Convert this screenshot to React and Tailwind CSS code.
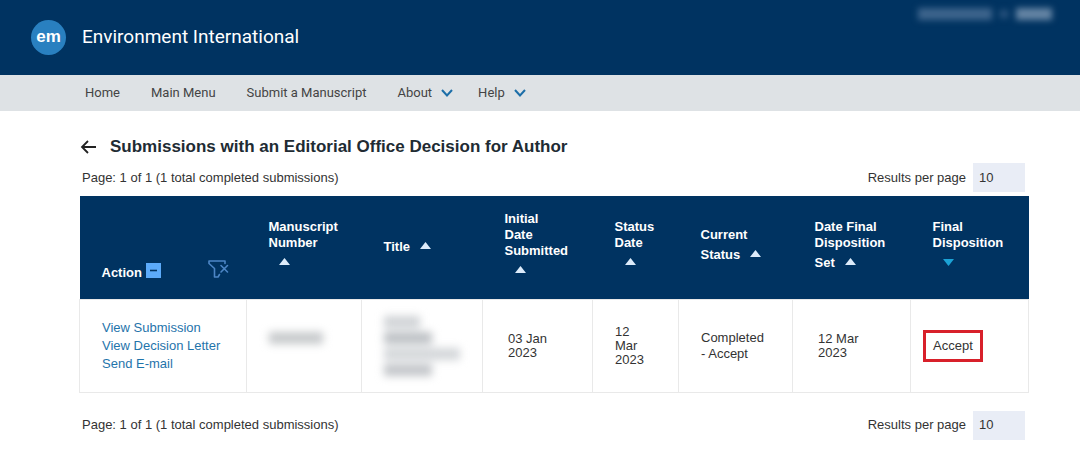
import { useState } from 'react';

const columns = [
  { lines: ['Manuscript', 'Number', ''], width: 'w-[115px]' },
  { lines: ['Title'], width: 'w-[121px]' },
  { lines: ['Initial', 'Date', 'Submitted', ''], width: 'w-[110px]' },
  { lines: ['Status', 'Date', ''], width: 'w-[86px]' },
  { lines: ['Current', 'Status'], width: 'w-[114px]' },
  { lines: ['Date Final', 'Disposition', 'Set'], width: 'w-[118px]' },
  { lines: ['Final', 'Disposition', ''], width: 'w-[118px]', sorted: true },
];

const SortArrow = ({ down }) => (
  <svg className={`h-6 w-[11px] ${down ? 'text-[#1ba3d6]' : 'text-[#dcebfa]'}`} viewBox="0 0 11 24" fill="currentColor">
    {down ? <path d="M0 8h11L5.5 15z" /> : <path d="M5.5 7L11 14H0z" />}
  </svg>
);

const Chevron = () => (
  <svg className="h-3 w-3 text-[#1c6ea8]" viewBox="0 0 12 12" fill="none" stroke="currentColor" strokeWidth="2">
    <path d="M1 3l5 5.5L11 3" />
  </svg>
);

const HeaderCell = ({ lines, sorted }) => {
  const first = lines.slice(0, -1);
  const last = lines[lines.length - 1];

  return (
    <th className="pl-[22px] pb-px text-left align-middle font-bold">
      <button type="button" aria-label={`Sort by ${lines.join(' ').trim()}`} className="block whitespace-nowrap text-left">
        {first.map((line) => (
          <span key={line} className="block">{line}</span>
        ))}
        <span className="flex h-6 items-center gap-[10px]">
          <span>{last}</span>
          <SortArrow down={sorted} />
        </span>
      </button>
    </th>
  );
};

const Pager = ({ id }) => {
  const [size, setSize] = useState('10');

  return (
    <div className="flex items-center justify-between px-[3px]">
      <p>Page: 1 of 1 (1 total completed submissions)</p>
      <div className="flex items-center gap-[7px]">
        <label htmlFor={id}>Results per page</label>
        <select
          id={id}
          value={size}
          onChange={(e) => setSize(e.target.value)}
          className="h-[29px] w-[52px] appearance-none bg-[#e9edf6] px-[6px]"
        >
          <option value="10">10</option>
          <option value="25">25</option>
          <option value="50">50</option>
        </select>
      </div>
    </div>
  );
};

const App = () => {
  return (
    <div className="min-h-screen bg-white font-['Liberation_Sans',Arial,sans-serif] text-[13px] text-[#333]">
      <header className="flex h-[75px] items-center justify-between bg-[#003361] pl-[31px] pr-7">
        <div className="flex items-center gap-4">
          <div className="flex h-[35px] w-[35px] items-center justify-center rounded-full bg-[#2980c0] pb-0.5 text-[17px] font-bold text-white">
            em
          </div>
          <h1 className="font-[Roboto,sans-serif] text-[19px] text-white">Environment International</h1>
        </div>
        <div className="flex items-center gap-2 self-start pt-2 blur-[3px]">
          <span className="h-3 w-[74px] bg-[#3c648c]" />
          <span className="h-2 w-2 bg-[#2c5680]" />
          <span className="h-3 w-9 bg-[#6484a4]" />
        </div>
      </header>

      <nav className="flex h-9 items-center gap-[31px] bg-[#dee2e5] pl-[85px] font-[Roboto,sans-serif] text-[13px] text-[#444]">
        <a href="#home">Home</a>
        <a href="#menu">Main Menu</a>
        <a href="#submit">Submit a Manuscript</a>
        <button type="button" className="flex items-center gap-[9px]">About <Chevron /></button>
        <button type="button" className="-ml-[6px] flex items-center gap-[9px]">Help <Chevron /></button>
      </nav>

      <main className="pl-[79px] pr-[52px] pt-6">
        <div className="flex items-center gap-[14px] pb-1">
          <a href="#back" aria-label="Back">
            <svg className="h-[14px] w-[17px] text-[#222]" viewBox="0 0 17 14" fill="none" stroke="currentColor" strokeWidth="1.8">
              <path d="M17 7H3.500M9 1L3 7l6 6" />
            </svg>
          </a>
          <h2 className="text-[17px] leading-6 font-bold text-[#212b33]">Submissions with an Editorial Office Decision for Author</h2>
        </div>

        <Pager id="results-top" />

        <table className="mt-1 w-full table-fixed border-collapse">
          <colgroup>
            <col className="w-[167px]" />
            {columns.map((col) => (
              <col key={col.lines.join(' ')} className={col.width} />
            ))}
          </colgroup>
          <thead className="bg-[#003361] leading-4 text-white">
            <tr className="h-[103px]">
              <th className="pl-[22px] pr-[18px] pb-[13px] text-left align-bottom font-bold">
                <div className="flex items-center">
                  <span>Action</span>
                  <button type="button" aria-label="Collapse actions" className="mb-1 ml-1">
                    <svg className="h-[15px] w-[15px]" viewBox="0 0 15 15">
                      <path d="M0 0h15v15H0z" fill="#5cabfa" />
                      <path d="M4 7.500h7" stroke="#003361" strokeWidth="1.6" />
                    </svg>
                  </button>
                  <button type="button" aria-label="Clear filters" className="mb-2 ml-auto">
                    <svg className="h-[18px] w-[21px]" viewBox="0 0 21 18" fill="none" stroke="#4c86c6" strokeWidth="1.6" strokeLinejoin="round" strokeLinecap="round">
                      <path d="M17 3.500V1H1v2.500l5.500 5V17H10l1.500-2.500" />
                      <path d="M13 5.500l6.500 6.500M19.500 5.500L13 12" />
                    </svg>
                  </button>
                </div>
              </th>
              {columns.map((col) => (
                <HeaderCell key={col.lines.join(' ')} {...col} />
              ))}
            </tr>
          </thead>
          <tbody>
            <tr className="h-[93px] *:border *:border-[#e9e9e9] *:pl-[22px]">
              <td className="leading-[18px] whitespace-nowrap text-[#1f74ab]">
                <a href="#submission" className="block">View Submission</a>
                <a href="#letter" className="block">View Decision Letter</a>
                <a href="#email" className="block">Send E-mail</a>
              </td>
              <td>
                <div className="mb-4 h-3 w-[54px] bg-[#c6c9cb] blur-[4px]" />
              </td>
              <td>
                <div className="flex flex-col gap-1 blur-[4px]">
                  <span className="h-3 w-9 bg-[#cfd2d5]" />
                  <span className="h-3 w-12 bg-[#bcc0c4]" />
                  <span className="h-3 w-[76px] bg-[#d3d6d9]" />
                  <span className="h-3 w-12 bg-[#c2c5c9]" />
                </div>
              </td>
              <td className="leading-[14px]"><div className="pl-[3px]">03 Jan<br />2023</div></td>
              <td className="leading-[14px]">12<br />Mar<br />2023</td>
              <td className="leading-4">Completed<br />- Accept</td>
              <td className="leading-[14px]"><div className="pl-[3px]">12 Mar<br />2023</div></td>
              <td>
                <span className="-ml-[10px] inline-flex h-8 items-center border-[3px] border-[#d8202a] px-[7px]">Accept</span>
              </td>
            </tr>
          </tbody>
        </table>

        <div className="pt-[18px]">
          <Pager id="results-bottom" />
        </div>
      </main>
    </div>
  );
};

export default App;
